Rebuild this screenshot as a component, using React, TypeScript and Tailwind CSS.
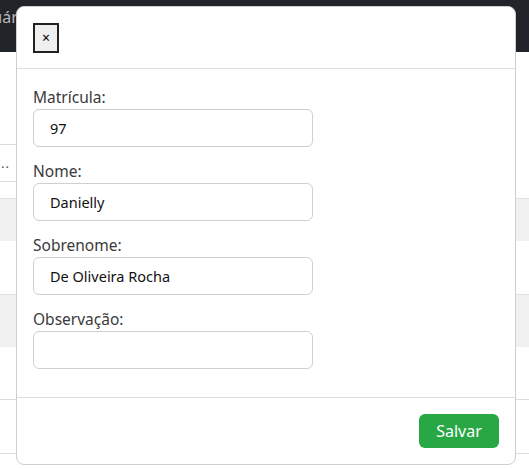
import React from "react";

const font = { fontFamily: '"Noto Sans", "Open Sans", Arial, sans-serif' };

function Field({ label, value }: { label: string; value: string }) {
  return (
    <div className="mb-3">
      <label className="block text-[15.5px] leading-6 text-[#3a3a3a]">{label}</label>
      <input
        readOnly
        value={value}
        className="block w-[280px] h-[38px] rounded-[6px] border border-[#cfcfcf] bg-white pl-4 pr-3 text-[14.5px] text-[#111] outline-none"
        style={font}
      />
    </div>
  );
}

export default function App() {
  return (
    <div className="relative w-[529px] h-[469px] overflow-hidden bg-white" style={font}>
      {/* navbar */}
      <div className="h-[52px] bg-[#212529] overflow-hidden">
        <div className="pt-[5px] ml-[-27px] text-[16px] text-[#b9babc] whitespace-nowrap">Usuários</div>
      </div>
      {/* page content behind */}
      <div className="mt-[92px]">
        <div className="h-[38px] border-y border-[#dcdcdc] w-[300px] flex items-center text-[13px] text-[#555] leading-none">
          <span className="ml-[1px] tracking-[1px]">..</span>
        </div>
        <div className="mt-[16px] border-t border-[#e3e3e3]">
          <div className="h-[42px] bg-[#f1f1f1]"></div>
          <div className="h-[53px] bg-white"></div>
          <div className="h-[53px] bg-[#f1f1f1] border-t border-[#e3e3e3]"></div>
          <div className="h-[52px] bg-white"></div>
          <div className="h-[54px] bg-white border-t border-[#dcdcdc]"></div>
          <div className="h-[20px] bg-white border-t border-[#dcdcdc]"></div>
        </div>
      </div>

      {/* modal */}
      <div className="absolute left-[16px] top-[6px] w-[500px] rounded-[8px] border border-[#cfcfcf] bg-white">
        <div className="px-4 pt-4 pb-[15px] border-b border-[#dedede]">
          <button className="flex h-[30px] w-[26px] items-center justify-center border-2 border-[#222] bg-[#efefef] text-[14px] leading-none text-black">
            ×
          </button>
        </div>
        <div className="px-4 pt-4 pb-4">
          <Field label="Matrícula:" value="97" />
          <Field label="Nome:" value="Danielly" />
          <Field label="Sobrenome:" value="De Oliveira Rocha" />
          <Field label="Observação:" value="" />
        </div>
        <div className="flex justify-end border-t border-[#dedede] p-4">
          <button className="h-[34px] w-[80px] rounded-[6px] bg-[#28a745] text-[16px] text-white">Salvar</button>
        </div>
      </div>
    </div>
  );
}
